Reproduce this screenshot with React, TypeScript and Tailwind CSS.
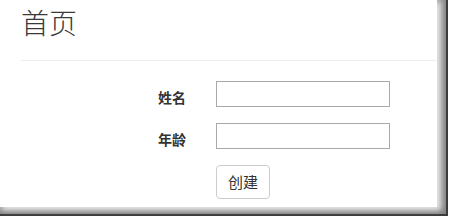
export default function App() {
  return (
    <div className="w-[450px] h-[220px] bg-white overflow-hidden" style={{ fontFamily: '"Noto Sans CJK SC", "Liberation Sans", sans-serif' }}>
      {/* window frame with drop shadow */}
      <div className="w-[448px] h-[216px] border-r-2 border-b-2 border-[#3c3c3c] bg-[#b4b4b4] shadow-[inset_-3px_-3px_6px_rgba(0,0,0,0.3)]">
        <div className="w-[437px] h-[207px] bg-white shadow-[3px_3px_5px_rgba(255,255,255,0.7)]">
          {/* page header */}
          <div className="ml-[21px] h-[61px] border-b border-[#eeeeee]">
            <h1 className="pt-[5px] text-[28px] leading-[34px] font-light text-[#3a3a3a]">首页</h1>
          </div>

          {/* form */}
          <form className="pt-[20px] flex flex-col gap-[16px]">
            <div className="flex items-start gap-[30px]">
              <label className="w-[186px] pt-[8px] text-right text-[14px] leading-[16px] font-bold text-[#333]">姓名</label>
              <input type="text" className="w-[174px] h-[26px] border border-[#a9a9a9] outline-none px-1 text-sm" />
            </div>
            <div className="flex items-start gap-[30px]">
              <label className="w-[186px] pt-[8px] text-right text-[14px] leading-[16px] font-bold text-[#333]">年龄</label>
              <input type="text" className="w-[174px] h-[26px] border border-[#a9a9a9] outline-none px-1 text-sm" />
            </div>
            <div className="flex gap-[30px]">
              <div className="w-[186px]" />
              <button type="button" className="w-[54px] h-[34px] border border-[#cccccc] rounded-[4px] bg-white text-[15px] text-[#333]">
                创建
              </button>
            </div>
          </form>
        </div>
      </div>
    </div>
  );
}
